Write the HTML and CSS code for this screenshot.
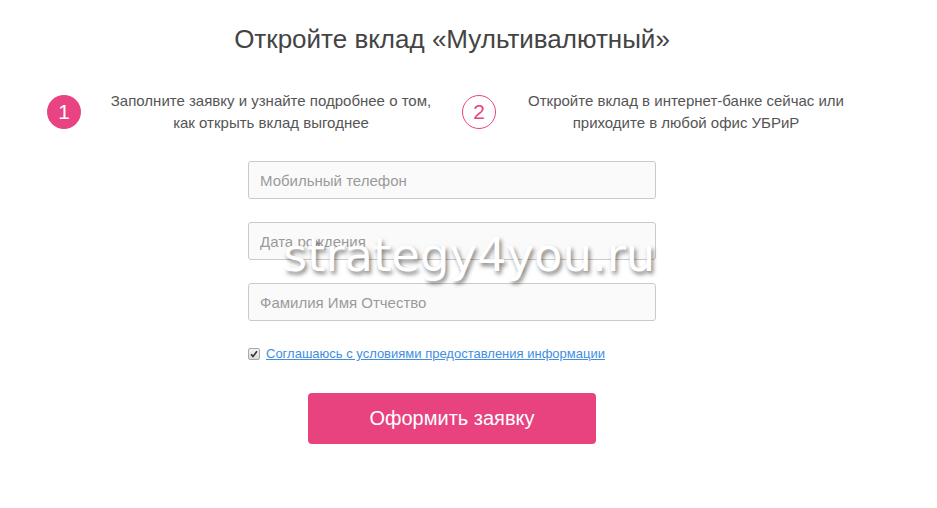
FILE: index.html
```html
<!DOCTYPE html>
<html lang="ru">
<head>
<meta charset="utf-8">
<title>Откройте вклад «Мультивалютный»</title>
<link rel="stylesheet" href="styles.css">
</head>
<body>
<div class="page">
  <h1 class="title">Откройте вклад «Мультивалютный»</h1>
  <div class="steps">
    <div class="step">
      <div class="num num-filled">1</div>
      <p class="step-text">Заполните заявку и узнайте подробнее о том,<br>как открыть вклад выгоднее</p>
    </div>
    <div class="step">
      <div class="num num-outline">2</div>
      <p class="step-text">Откройте вклад в интернет-банке сейчас или<br>приходите в любой офис УБРиР</p>
    </div>
  </div>
  <form class="form">
    <input class="field" type="text" placeholder="Мобильный телефон">
    <input class="field" type="text" placeholder="Дата рождения">
    <input class="field" type="text" placeholder="Фамилия Имя Отчество">
    <div class="agree">
      <span class="check"><svg width="8" height="8" viewBox="0 0 8 8"><path d="M1 4.2 L3 6.4 L7 1.2" fill="none" stroke="#333" stroke-width="1.6"/></svg></span>
      <a class="agree-link" href="#">Соглашаюсь с условиями предоставления информации</a>
    </div>
    <button class="submit" type="button">Оформить заявку</button>
  </form>
  <div class="watermark">strategy4you.ru</div>
</div>
</body>
</html>
```
FILE: styles.css
```css
* { box-sizing: border-box; }
html, body { margin: 0; padding: 0; background: #fff; }
body { font-family: "Liberation Sans", Arial, sans-serif; color: #444; }

.page {
  position: relative;
  width: 904px;
  padding-top: 22px;
}

.title {
  margin: 0;
  text-align: center;
  font-weight: normal;
  font-size: 26px;
  line-height: 34px;
  color: #444;
}

.steps {
  display: flex;
  gap: 16px;
  margin: 34px 0 0 47px;
}

.step {
  display: flex;
  align-items: center;
  gap: 15px;
}

.num {
  width: 34px;
  height: 34px;
  border-radius: 50%;
  display: flex;
  align-items: center;
  justify-content: center;
  font-size: 21px;
  flex: none;
}
.num-filled { background: #e94381; color: #fff; }
.num-outline { border: 1.5px solid #e94381; color: #e94381; }

.step-text {
  margin: 0;
  width: 350px;
  text-align: center;
  font-size: 15px;
  line-height: 22px;
  color: #555;
}

.form {
  width: 408px;
  margin: 27px auto 0;
  display: flex;
  flex-direction: column;
}

.field {
  height: 38px;
  margin-bottom: 23px;
  padding: 0 11px;
  border: 1px solid #cacaca;
  border-radius: 3px;
  background: #fafafa;
  font-family: "Liberation Sans", Arial, sans-serif;
  font-size: 15px;
  color: #444;
}
.field::placeholder { color: #9a9a9a; }

.agree {
  display: flex;
  align-items: center;
  gap: 6px;
  margin-top: 2px;
  font-size: 13px;
}
.check {
  width: 12px;
  height: 12px;
  border: 1px solid #a8a8a8;
  border-radius: 2px;
  background: linear-gradient(#f2f2f2, #dcdcdc);
  display: flex;
  align-items: center;
  justify-content: center;
  flex: none;
}
.agree-link { color: #3f8ee0; text-decoration: underline; }

.submit {
  align-self: center;
  width: 288px;
  height: 51px;
  margin-top: 32px;
  border: none;
  border-radius: 4px;
  background: #e8437f;
  color: #fff;
  font-family: "Liberation Sans", Arial, sans-serif;
  font-size: 20px;
}

.watermark {
  position: absolute;
  left: 283px;
  top: 227px;
  font-family: "DejaVu Sans", Verdana, sans-serif;
  font-size: 46.5px;
  line-height: 56px;
  color: #fff;
  text-shadow: 2px 3px 4px rgba(0,0,0,0.5);
  pointer-events: none;
}
```
